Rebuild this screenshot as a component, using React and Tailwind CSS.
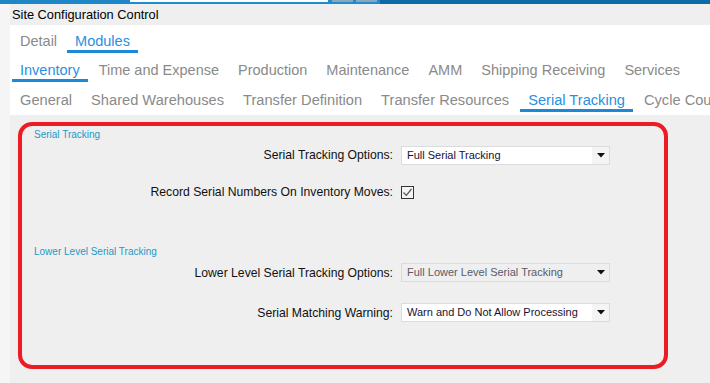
import React from "react";

function Tab({ label, active }) {
  return (
    <div
      className={
        "px-2 h-[21px] leading-[18px] border-b-[3px] whitespace-nowrap shrink-0 " +
        (active ? "border-[#1b88d8] text-[#2b8fe0]" : "border-transparent text-[#8a8a8a]")
      }
    >
      {label}
    </div>
  );
}

function Select({ value, disabled }) {
  return (
    <div
      className={
        "w-[209px] h-[19px] border border-[#dcdcdc] flex items-stretch " +
        (disabled ? "bg-[#efefef] text-[#5a5a6a]" : "bg-white text-[#1a1030]")
      }
    >
      <div className="flex-1 pl-[5px] leading-[17px] text-[11px] whitespace-nowrap overflow-hidden">{value}</div>
      <div className={"w-[17px] flex items-center justify-center " + (disabled ? "" : "bg-[#f4f4f4]")}>
        <svg width="8" height="5" viewBox="0 0 8 5">
          <polygon points="0,0 8,0 4,4.5" fill="#111" />
        </svg>
      </div>
    </div>
  );
}

function Row({ label, children, className }) {
  return (
    <div className={"flex items-center " + (className || "")}>
      <div className="w-[371px] text-right text-[12.2px] text-[#111] whitespace-nowrap">{label}</div>
      <div className="ml-[8px]">{children}</div>
    </div>
  );
}

export default function App() {
  const font = { fontFamily: "'Liberation Sans', Arial, sans-serif" };
  return (
    <div className="w-[710px] h-[383px] overflow-hidden bg-[#f5f5f5] flex flex-col" style={font}>
      <div className="h-[4px] shrink-0 flex bg-[#1d8dd0]">
        <div className="w-[130px] shrink-0 bg-[#1f86c6]" />
        <div className="w-[198px] shrink-0 h-[2px] bg-white" />
        <div className="w-[4px] shrink-0" />
        <div className="w-[21px] shrink-0 h-[2px] bg-[#8aa7bb]" />
        <div className="w-[3px] shrink-0" />
        <div className="w-[21px] shrink-0 h-[2px] bg-[#8aa7bb]" />
        <div className="w-[3px] shrink-0" />
        <div className="flex-1 bg-[#0c6aa8]" />
      </div>
      <div className="flex-1 flex min-h-0">
        <div className="w-[10px] shrink-0 bg-[#f5f5f5]" />
        <div className="flex-1 min-w-0 flex flex-col overflow-hidden">
          <div className="h-[21px] shrink-0 bg-[#efefef] pl-[2px] text-[12.8px] leading-[21px] text-black">
            Site Configuration Control
          </div>
          <div className="h-[90px] shrink-0 bg-white text-[14.5px] flex flex-col">
            <div className="h-[28px] flex items-end gap-[2px] pl-[2px]">
              <Tab label="Detail" />
              <Tab label="Modules" active />
            </div>
            <div className="h-[29px] flex items-end gap-[3px] pl-[2px]">
              <Tab label="Inventory" active />
              <Tab label="Time and Expense" />
              <Tab label="Production" />
              <Tab label="Maintenance" />
              <Tab label="AMM" />
              <Tab label="Shipping Receiving" />
              <Tab label="Services" />
            </div>
            <div className="h-[30px] flex items-end gap-[3px] pl-[2px] text-[14.65px]">
              <Tab label="General" />
              <Tab label="Shared Warehouses" />
              <Tab label="Transfer Definition" />
              <Tab label="Transfer Resources" />
              <Tab label="Serial Tracking" active />
              <Tab label="Cycle Counts" />
            </div>
          </div>
          <div className="flex-1 bg-[#efefef] pt-[7px] pl-[8px]">
            <div className="w-[650px] h-[247px] border-4 border-[#ed1c24] rounded-[14px] flex flex-col">
              <div className="pl-[12px] pt-[3px] text-[10px] leading-[12px] text-[#1a9ac9]">Serial Tracking</div>
              <Row label="Serial Tracking Options:" className="mt-[5px]">
                <Select value="Full Serial Tracking" />
              </Row>
              <Row label="Record Serial Numbers On Inventory Moves:" className="mt-[18px]">
                <div className="w-[13px] h-[13px] border border-[#333] bg-[#f4f4f4] flex items-center justify-center">
                  <svg width="11" height="11" viewBox="0 0 11 11">
                    <polyline points="1.5,5.5 4.3,8.3 9.5,2" fill="none" stroke="#555" strokeWidth="1.2" />
                  </svg>
                </div>
              </Row>
              <div className="pl-[12px] mt-[45px] text-[10px] leading-[12px] text-[#1a9ac9]">Lower Level Serial Tracking</div>
              <Row label="Lower Level Serial Tracking Options:" className="mt-[5px]">
                <Select value="Full Lower Level Serial Tracking" disabled />
              </Row>
              <Row label="Serial Matching Warning:" className="mt-[21px]">
                <Select value="Warn and Do Not Allow Processing" />
              </Row>
            </div>
          </div>
        </div>
      </div>
    </div>
  );
}
